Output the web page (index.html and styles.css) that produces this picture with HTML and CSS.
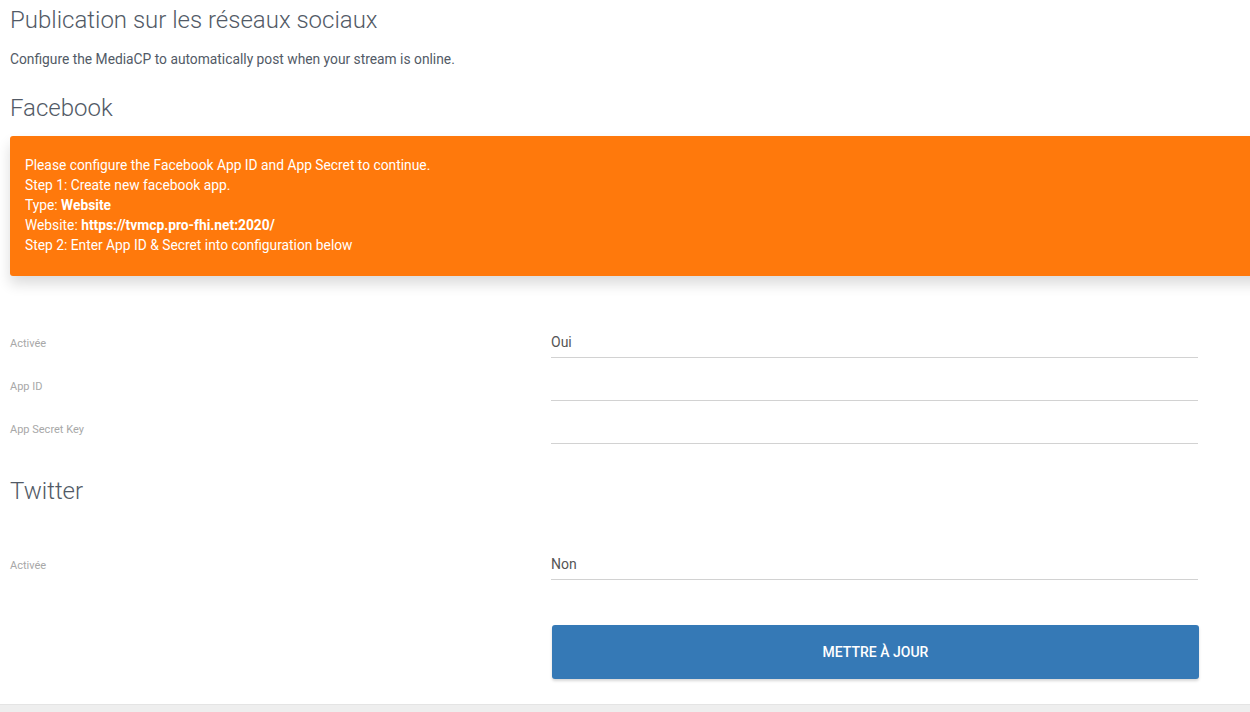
FILE: index.html
```html
<!DOCTYPE html>
<html>
<head>
<meta name="viewport" content="width=device-width, initial-scale=1">
<link rel="stylesheet" href="styles.css">
</head>
<body>

<div class="panel">
  <h1 class="page-title">Publication sur les réseaux sociaux</h1>
  <p class="page-desc">Configure the MediaCP to automatically post when your stream is online.</p>

  <h2 class="section-title">Facebook</h2>
  <div class="alert-warning">
    Please configure the Facebook App ID and App Secret to continue.<br>
    Step 1: Create new facebook app.<br>
    Type: <b>Website</b><br>
    Website: <b>https://tvmcp.pro-fhi.net:2020/</b><br>
    Step 2: Enter App ID &amp; Secret into configuration below
  </div>

  <form name="socialform" class="settings">
    <div class="form-row">
      <label class="form-label">Activée</label>
      <div class="form-field"><input type="text" class="field" value="Oui"></div>
    </div>
    <div class="form-row">
      <label class="form-label">App ID</label>
      <div class="form-field"><input type="text" class="field" value=""></div>
    </div>
    <div class="form-row">
      <label class="form-label">App Secret Key</label>
      <div class="form-field"><input type="text" class="field" value=""></div>
    </div>

    <h2 class="section-title twitter">Twitter</h2>

    <div class="form-row first">
      <label class="form-label">Activée</label>
      <div class="form-field"><input type="text" class="field" value="Non"></div>
    </div>

    <div class="form-row actions">
      <div></div>
      <div class="form-field"><button type="button" class="btn-primary">METTRE À JOUR</button></div>
    </div>
  </form>
</div>

</body>
</html>
```

FILE: styles.css
```css
html, body {
  margin: 0;
  padding: 0;
  background: #eeeeee;
  overflow: hidden;
}

body {
  font-family: Roboto, "Liberation Sans", sans-serif;
  color: #525a66;
}

.panel {
  background: #ffffff;
  width: 1280px;
  height: 705px;
  padding: 0 0 0 10px;
  box-sizing: border-box;
  border-bottom: 1px solid #e4e4e4;
}

.page-title {
  margin: 0;
  padding-top: 5px;
  font-size: 24px;
  font-weight: 300;
  line-height: 30px;
}

.page-desc {
  margin: 15px 0 0 0;
  font-size: 13.8px;
  line-height: 18px;
}

.section-title {
  margin: 25px 0 0 0;
  font-size: 24px;
  font-weight: 300;
  line-height: 30px;
}

.alert-warning {
  margin-top: 13px;
  height: 140px;
  box-sizing: border-box;
  padding: 19px 15px;
  background: #ff790c;
  color: #ffffff;
  font-size: 13.8px;
  line-height: 20px;
  border-radius: 3px;
  box-shadow: 0 8px 14px rgba(0, 0, 0, 0.14);
}

.alert-warning b {
  font-weight: 700;
}

.settings {
  margin-top: 39px;
}

.form-row {
  display: grid;
  grid-template-columns: 541px 647px;
  align-items: end;
  height: 43px;
}

.form-row.first {
  margin-top: 31px;
}

.form-label {
  font-size: 11px;
  color: #a8a8a8;
  padding-bottom: 8px;
  line-height: 12px;
}

.field {
  width: 100%;
  box-sizing: border-box;
  border: none;
  border-bottom: 1px solid #d2d2d2;
  padding: 0 0 7px 0;
  font-family: Roboto, "Liberation Sans", sans-serif;
  font-size: 14px;
  color: #555555;
  outline: none;
  background: transparent;
}

.section-title.twitter {
  margin-top: 32px;
}

.form-row.actions {
  height: auto;
  margin-top: 45px;
}

.btn-primary {
  width: 100%;
  height: 54px;
  margin-left: 1px;
  border: none;
  border-radius: 3px;
  background: #3579b6;
  color: #ffffff;
  font-family: Roboto, "Liberation Sans", sans-serif;
  font-size: 14px;
  font-weight: 500;
  box-shadow: 0 2px 3px rgba(0, 0, 0, 0.16);
  cursor: pointer;
}
```
